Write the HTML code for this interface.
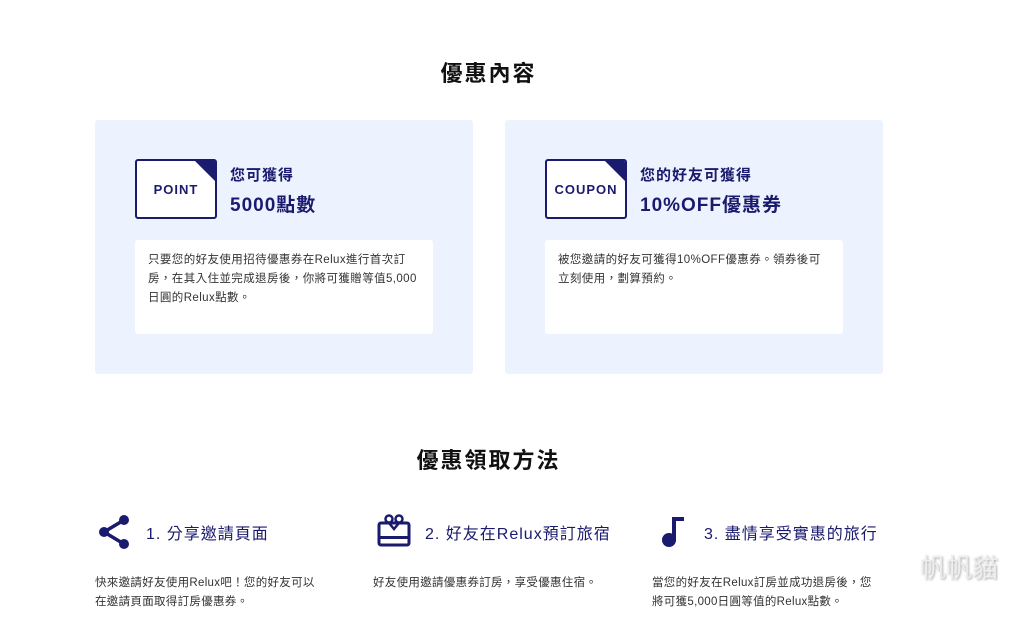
<!DOCTYPE html>
<html><head><meta charset="utf-8"><style>
*{margin:0;padding:0;box-sizing:border-box}
body{width:1024px;height:626px;background:#fff;font-family:"Liberation Sans","Noto Sans CJK TC",sans-serif;position:relative;overflow:hidden;color:#222}
.abs{position:absolute}
h2{position:absolute;left:0;width:977px;text-align:center;font-size:22px;font-weight:bold;color:#111;letter-spacing:2px}
.card{position:absolute;top:120px;width:378px;height:254px;background:#edf3fe;border-radius:3px}
.tk{position:absolute;left:40px;top:39px;width:82px;height:60px;border:2px solid #1a1a6e;border-radius:3px;background:#fff;overflow:hidden;display:flex;align-items:center;justify-content:center;font-weight:bold;font-size:13px;color:#1a1a6e;letter-spacing:1px}
.tk svg{position:absolute;right:0;top:0}
.t1{position:absolute;left:135px;top:44px;font-size:15px;color:#1a1a6e;font-weight:bold;letter-spacing:1px}
.t2{position:absolute;left:135px;top:70px;font-size:19px;color:#1a1a6e;font-weight:bold;letter-spacing:1px}
.box{position:absolute;left:40px;top:120px;width:298px;height:94px;background:#fff;border-radius:3px;padding:11px 13px;font-size:11.5px;line-height:19px;color:#333;letter-spacing:0.4px}
.st{position:absolute;top:520px;font-size:16px;color:#1a1a6e;letter-spacing:1px}
.sd{position:absolute;top:574px;font-size:11.5px;line-height:19px;color:#333;letter-spacing:0.3px}
</style></head><body>
<h2 style="top:56px">優惠內容</h2>
<div class="card" style="left:95px">
 <div class="tk"><svg width="24" height="24" viewBox="0 0 24 24"><path d="M4 0H24V20Z" fill="#1a1a6e"/></svg>POINT</div>
 <div class="t1">您可獲得</div><div class="t2">5000點數</div>
 <div class="box">只要您的好友使用招待優惠券在Relux進行首次訂<br>房，在其入住並完成退房後，你將可獲贈等值5,000<br>日圓的Relux點數。</div>
</div>
<div class="card" style="left:505px">
 <div class="tk"><svg width="24" height="24" viewBox="0 0 24 24"><path d="M4 0H24V20Z" fill="#1a1a6e"/></svg>COUPON</div>
 <div class="t1">您的好友可獲得</div><div class="t2">10%OFF優惠券</div>
 <div class="box">被您邀請的好友可獲得10%OFF優惠券。領券後可<br>立刻使用，劃算預約。</div>
</div>
<h2 style="top:443px">優惠領取方法</h2>
<svg class="abs" style="left:97px;top:514px" width="34" height="36" viewBox="0 0 34 36"><circle cx="27" cy="6" r="5" fill="#1a1a6e"/><circle cx="7" cy="18" r="5" fill="#1a1a6e"/><circle cx="27" cy="30" r="5" fill="#1a1a6e"/><path d="M27 6L7 18L27 30" stroke="#1a1a6e" stroke-width="3.5" fill="none"/></svg>
<div class="st" style="left:146px">1. 分享邀請頁面</div>
<div class="sd" style="left:95px">快來邀請好友使用Relux吧！您的好友可以<br>在邀請頁面取得訂房優惠券。</div>
<svg class="abs" style="left:377px;top:514px" width="34" height="33" viewBox="0 0 34 33"><rect x="2" y="9" width="30" height="22" rx="2" fill="none" stroke="#1a1a6e" stroke-width="3"/><rect x="2" y="22" width="30" height="3" fill="#1a1a6e"/><circle cx="12" cy="5" r="3.5" fill="none" stroke="#1a1a6e" stroke-width="2.5"/><circle cx="22" cy="5" r="3.5" fill="none" stroke="#1a1a6e" stroke-width="2.5"/><path d="M12 9l5 6 5-6" stroke="#1a1a6e" stroke-width="2.5" fill="none"/></svg>
<div class="st" style="left:425px">2. 好友在Relux預訂旅宿</div>
<div class="sd" style="left:373px">好友使用邀請優惠券訂房，享受優惠住宿。</div>
<svg class="abs" style="left:661px;top:516px" width="26" height="32" viewBox="0 0 26 32"><circle cx="8" cy="24" r="7" fill="#1a1a6e"/><rect x="11" y="1" width="4" height="24" fill="#1a1a6e"/><rect x="11" y="1" width="12" height="4" fill="#1a1a6e"/></svg>
<div class="st" style="left:704px">3. 盡情享受實惠的旅行</div>
<div class="sd" style="left:652px">當您的好友在Relux訂房並成功退房後，您<br>將可獲5,000日圓等值的Relux點數。</div>
<div class="abs" style="left:920px;top:548px;font-size:26px;color:#eee;text-shadow:1px 1px 2px #aaa">帆帆貓</div>
</body></html>
